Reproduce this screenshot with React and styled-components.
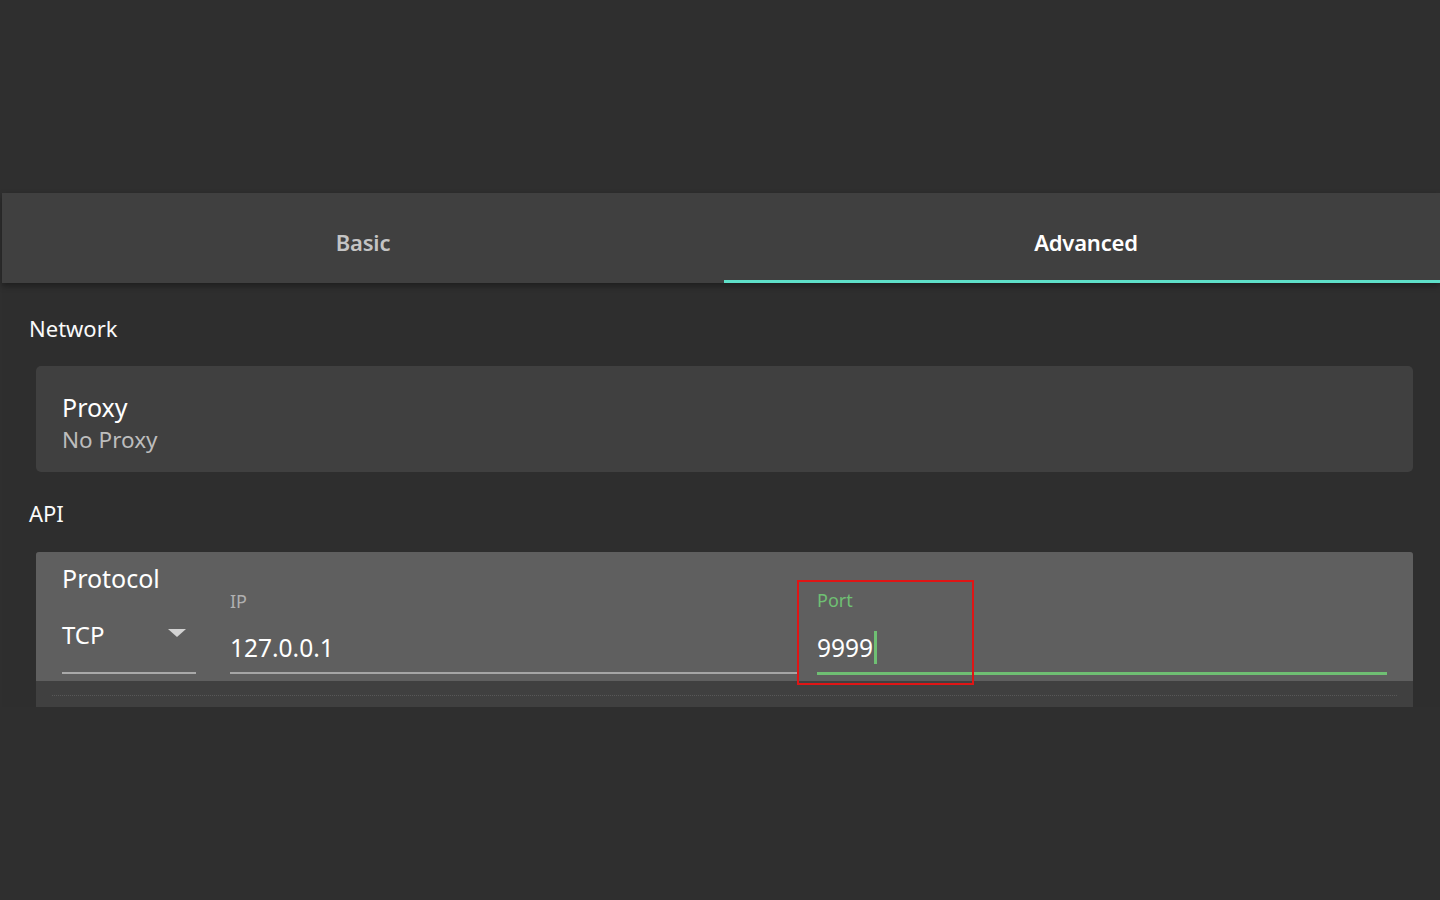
import React from 'react'
import styled, { createGlobalStyle } from 'styled-components'

const GlobalStyle = createGlobalStyle`
  html, body {
    margin: 0;
    background: #2f2f2f;
    font-family: "Noto Sans", "Open Sans", sans-serif;
    color: #fff;
  }
`

const Page = styled.div`
  height: 900px;
  padding-top: 193px;
  box-sizing: border-box;
  padding-left: 2px;
`

const Panel = styled.div`
  background: #2e2e2e;
`

const TabBar = styled.div`
  display: grid;
  grid-template-columns: 722px 1fr;
  height: 90px;
  background: #404040;
  box-shadow: 0 3px 6px rgba(0, 0, 0, 0.35);
  position: relative;
  z-index: 1;
`

const Tab = styled.div`
  display: flex;
  align-items: center;
  justify-content: center;
  font-size: 22px;
  font-weight: 600;
  letter-spacing: -0.2px;
  color: ${p => (p.active ? '#ffffff' : '#c4c4c4')};
  border-bottom: 3px solid ${p => (p.active ? '#5fe0c9' : 'transparent')};
  padding: 10px 0 0 ${p => (p.active ? '8px' : '0')};
`

const Content = styled.div`
  padding: 30px 27px 0 27px;
`

const SectionTitle = styled.div`
  font-size: 22px;
  line-height: 30px;
  color: #fafafa;
  margin-bottom: 23px;
`

const Card = styled.div`
  margin-left: 7px;
  background: #404040;
  border-radius: 5px;
  padding: 25px 26px 17px;
  margin-bottom: 26px;
`

const CardTitle = styled.div`
  font-size: 25px;
  line-height: 32px;
  color: #fff;
`

const CardValue = styled.div`
  font-size: 22.5px;
  line-height: 30px;
  color: #bdbdbd;
  margin-top: 2px;
`

const FormCard = styled.div`
  margin: 24px 0 0 7px;
  background: #404040;
  border-radius: 3px 3px 0 0;
  overflow: hidden;
`

const FormRow = styled.div`
  display: flex;
  align-items: flex-end;
  gap: 20px;
  background: #5f5f5f;
  padding: 10px 26px 7px;
`

const ProtocolColumn = styled.div`
  width: 134px;
  margin-right: 14px;
`

const Select = styled.div`
  display: flex;
  align-items: center;
  justify-content: space-between;
  padding: 25px 10px 21px 0;
  border-bottom: 2px solid #a9a9a9;
  font-size: 24px;
  line-height: 32px;
`

const Caret = styled.span`
  width: 0;
  height: 0;
  border-left: 9px solid transparent;
  border-right: 9px solid transparent;
  border-top: 8px solid #d2d2d2;
  margin-top: -4px;
`

const Field = styled.div`
  flex: ${p => p.grow} 1 0;
  position: relative;
  border-bottom: ${p => (p.focused ? '3px solid #6fbf73' : '2px solid #a5a5a5')};
  margin-bottom: ${p => (p.focused ? '-1px' : '0')};
`

const Label = styled.div`
  font-size: 18px;
  line-height: 24px;
  color: ${p => (p.focused ? '#6fbf73' : '#b0b0b0')};
`

const Value = styled.div`
  display: flex;
  align-items: center;
  font-size: 24.5px;
  line-height: 32px;
  margin-top: 19px;
  padding-bottom: 8px;
  color: #fff;
`

const Cursor = styled.span`
  width: 3px;
  height: 33px;
  background: #6fbf73;
  margin-left: 1px;
`

const Highlight = styled.div`
  position: absolute;
  left: -20px;
  top: -8px;
  width: 177px;
  height: 105px;
  box-sizing: border-box;
  border: 2px solid #e01515;
  pointer-events: none;
`

const FormFooter = styled.div`
  height: 26px;
  padding: 0 16px;
  display: flex;
  align-items: center;
`

const DottedRule = styled.div`
  flex: 1;
  border-top: 1px dotted #585858;
  margin-top: 2px;
`

export default function App() {
  return (
    <>
      <GlobalStyle />
      <Page>
        <Panel>
          <TabBar>
            <Tab>Basic</Tab>
            <Tab active>Advanced</Tab>
          </TabBar>

          <Content>
            <SectionTitle>Network</SectionTitle>
            <Card>
              <CardTitle>Proxy</CardTitle>
              <CardValue>No Proxy</CardValue>
            </Card>

            <SectionTitle>API</SectionTitle>
            <FormCard>
              <FormRow>
                <ProtocolColumn>
                  <CardTitle>Protocol</CardTitle>
                  <Select>
                    TCP
                    <Caret />
                  </Select>
                </ProtocolColumn>
                <Field grow={567}>
                  <Label>IP</Label>
                  <Value>127.0.0.1</Value>
                </Field>
                <Field grow={570} focused>
                  <Highlight />
                  <Label focused>Port</Label>
                  <Value>
                    9999
                    <Cursor />
                  </Value>
                </Field>
              </FormRow>
              <FormFooter>
                <DottedRule />
              </FormFooter>
            </FormCard>
          </Content>
        </Panel>
      </Page>
    </>
  )
}
